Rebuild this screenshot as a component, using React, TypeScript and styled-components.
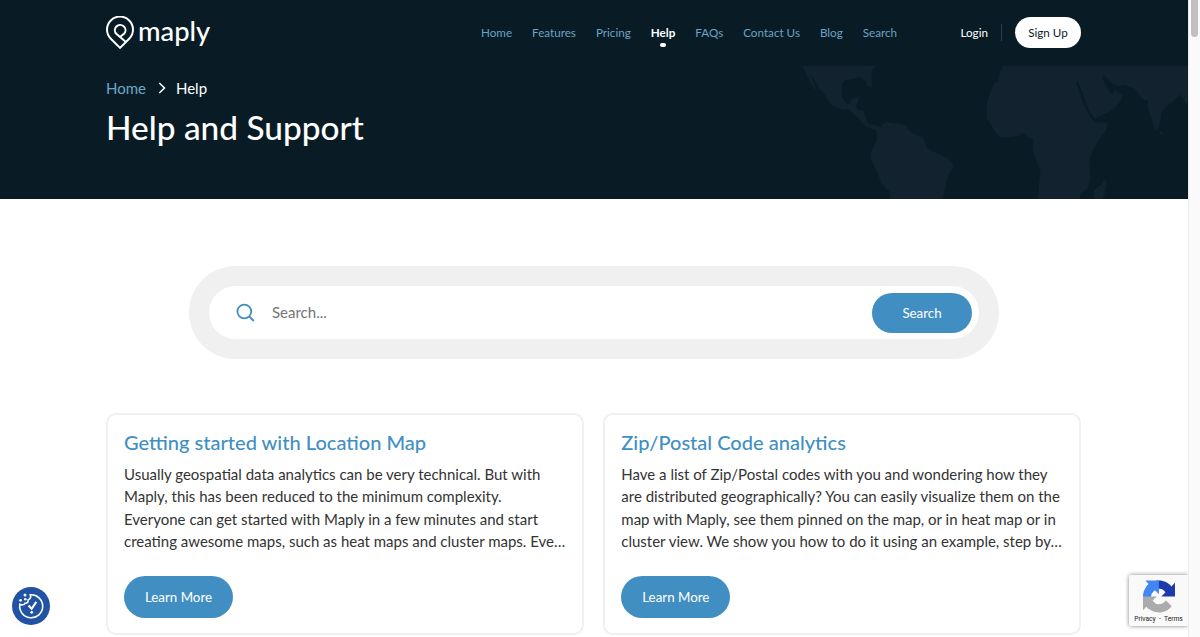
import React from "react";
import styled, { createGlobalStyle } from "styled-components";

const GlobalStyle = createGlobalStyle`
  *, *::before, *::after { box-sizing: border-box; }
  body { margin: 0; background: #fff; overflow: hidden; font-family: Lato, "Liberation Sans", sans-serif; }
  h1, h2, p { margin: 0; }
  a { text-decoration: none; color: inherit; }
  button, input { font-family: inherit; border: 0; padding: 0; }
`;

const Page = styled.div`
  display: flex;
  height: 637px;
  overflow: hidden;
`;
const Content = styled.div`
  width: 1188px;
  flex: none;
`;
const ScrollTrack = styled.div`
  flex: 1;
  background: #fafafa;
  border-left: 1px solid #ececec;
  padding-left: 2px;
`;
const ScrollThumb = styled.div`
  width: 7px;
  height: 37px;
  border-radius: 0 0 4px 4px;
  background: #c1c1c1;
`;

const TopBar = styled.header`
  height: 66px;
  background: #091c25;
  padding: 0 107px 1px 106px;
  display: flex;
  align-items: center;
`;
const Logo = styled.a`
  display: flex;
  align-items: center;
  width: 375px;
  color: #fff;
`;
const LogoMark = styled.svg`
  width: 28px;
  height: 34px;
  margin-right: 4px;
`;
const Wordmark = styled.span`
  font-size: 27.3px;
  line-height: 34px;
  font-weight: 500;
  margin-top: -4px;
`;
const Nav = styled.nav`
  display: flex;
  gap: 20px;
  padding-bottom: 2px;
`;
const NavLink = styled.a<{ $active?: boolean }>`
  position: relative;
  font-size: 11.67px;
  line-height: 18px;
  color: ${(p) => (p.$active ? "#fff" : "#6aa3c4")};
  font-weight: ${(p) => (p.$active ? 700 : 400)};
`;
const ActiveDot = styled.span`
  position: absolute;
  left: 50%;
  top: 20px;
  width: 6px;
  height: 4px;
  margin-left: -3px;
  border-radius: 2px;
  background: #fff;
`;
const Account = styled.div`
  margin-left: auto;
  display: flex;
  align-items: center;
  font-size: 11.67px;
  line-height: 18px;
  color: #fff;
`;
const LoginLink = styled.a`
  padding-bottom: 2px;
`;
const Divider = styled.span`
  width: 1px;
  height: 17px;
  margin: 0 13px;
  background: #1d455b;
`;
const SignUp = styled.button`
  width: 66px;
  height: 31px;
  padding-bottom: 2px;
  border-radius: 16px;
  background: #fff;
  color: #091c25;
  font-size: 11.67px;
`;

const Hero = styled.section`
  height: 133px;
  background: #091c25;
  display: grid;
  grid-template-columns: 674px 408px;
  padding-left: 106px;
`;
const HeroText = styled.div`
  padding-top: 12px;
`;
const Breadcrumb = styled.div`
  display: flex;
  align-items: center;
  font-size: 15px;
  line-height: 20px;
  color: #fff;
`;
const CrumbLink = styled.a`
  color: #6ca9c7;
`;
const Chevron = styled.svg`
  width: 8px;
  height: 12px;
  margin: 0 10px 0 12px;
`;
const Title = styled.h1`
  font-size: 33.4px;
  font-weight: 500;
  line-height: 40px;
  color: #fff;
  margin-top: 9px;
`;
const WorldMap = styled.svg`
  width: 408px;
  height: 133px;
  display: block;
`;

const SearchFrame = styled.form`
  width: 810px;
  height: 93px;
  margin: 67px auto 54px 189px;
  padding: 20px;
  border-radius: 47px;
  background: #f0f0f0;
`;
const SearchBox = styled.div`
  height: 53px;
  border-radius: 27px;
  background: #fff;
  display: flex;
  align-items: center;
  padding: 0 7px 0 27px;
`;
const SearchIcon = styled.svg`
  width: 20px;
  height: 20px;
`;
const SearchInput = styled.input`
  flex: 1;
  margin-left: 16px;
  padding-bottom: 2px;
  font-size: 15px;
  color: #333;
  outline: 0;
  background: transparent;
  &::placeholder { color: #757575; opacity: 1; }
`;
const PillButton = styled.button<{ $w: number; $h: number }>`
  width: ${(p) => p.$w}px;
  height: ${(p) => p.$h}px;
  border-radius: 21px;
  background: #418fc2;
  color: #fff;
  font-size: 13.33px;
`;

const Cards = styled.main`
  display: grid;
  grid-template-columns: 478px 478px;
  gap: 19.3px;
  padding-left: 106px;
`;
const Card = styled.article`
  height: 222px;
  border: 2px solid #f0f0f0;
  border-radius: 10px;
  padding: 14px 14px 0 16px;
`;
const CardTitle = styled.h2`
  font-size: 20.05px;
  line-height: 26px;
  font-weight: 500;
  color: #418fc2;
`;
const CardText = styled.p`
  margin: 7.5px 0 23.5px;
  font-size: 15px;
  line-height: 22.5px;
  color: #333;
  white-space: nowrap;
`;

const CookieButton = styled.button`
  position: absolute;
  left: 12px;
  top: 587px;
  width: 38px;
  height: 38px;
  border-radius: 50%;
  background: #2152a3;
`;
const CookieArt = styled.svg`
  display: block;
  width: 38px;
  height: 38px;
`;
const Captcha = styled.aside`
  position: absolute;
  left: 1129px;
  top: 575px;
  width: 59px;
  height: 51px;
  background: #f9f9f9;
  border-radius: 2px 0 0 2px;
  box-shadow: 0 0 4px #808080;
  clip-path: inset(-5px 0 -5px -5px);
  display: flex;
  flex-direction: column;
  align-items: center;
  padding-top: 5px;
`;
const CaptchaArt = styled.svg`
  width: 32px;
  height: 33px;
`;
const CaptchaText = styled.span`
  font: 6.67px/10px Roboto, sans-serif;
  margin-top: 1px;
  color: #222;
  white-space: pre;
`;

const navItems = ["Home", "Features", "Pricing", "Help", "FAQs", "Contact Us", "Blog", "Search"];

const cards = [
  {
    title: "Getting started with Location Map",
    lines: [
      "Usually geospatial data analytics can be very technical. But with",
      "Maply, this has been reduced to the minimum complexity.",
      "Everyone can get started with Maply in a few minutes and start",
      "creating awesome maps, such as heat maps and cluster maps. Eve…",
    ],
  },
  {
    title: "Zip/Postal Code analytics",
    lines: [
      "Have a list of Zip/Postal codes with you and wondering how they",
      "are distributed geographically? You can easily visualize them on the",
      "map with Maply, see them pinned on the map, or in heat map or in",
      "cluster view. We show you how to do it using an example, step by…",
    ],
  },
];

export default function App() {
  return (
    <Page>
      <GlobalStyle />
      <Content>
        <TopBar>
          <Logo href="#">
            <LogoMark viewBox="0 0 28 34" fill="none" stroke="#fff" strokeWidth="2">
              <path d="M19.3 25.4 10.3 17.8A5.3 5.3 0 1 1 18.300 17.500L14.200 20.800M14 31.900 4.800 22.800A13 13 0 1 1 23.200 22.800Z" />
            </LogoMark>
            <Wordmark>maply</Wordmark>
          </Logo>
          <Nav>
            {navItems.map((item) => (
              <NavLink key={item} href="#" $active={item === "Help"}>
                {item}
                {item === "Help" && <ActiveDot />}
              </NavLink>
            ))}
          </Nav>
          <Account>
            <LoginLink href="#">Login</LoginLink>
            <Divider />
            <SignUp>Sign Up</SignUp>
          </Account>
        </TopBar>
        <Hero>
          <HeroText>
            <Breadcrumb>
              <CrumbLink href="#">Home</CrumbLink>
              <Chevron viewBox="0 0 8 12" fill="none" stroke="#fff" strokeWidth="1.5">
                <path d="m1.3 1 5.2 5-5.2 5" />
              </Chevron>
              <span>Help</span>
            </Breadcrumb>
            <Title>Help and Support</Title>
          </HeroText>
          <WorldMap viewBox="0 48 1224 399" fill="#12232f">
            <path d="M66 48H290L274 62 276 112 264 108 252 88 238 80 222 86 196 90 186 100V142L198 160 208 163 216 146 238 142 228 168 232 178 250 184 256 200 266 222 288 226 300 230 318 214 330 218 362 222 380 228 388 242 402 252 428 262 440 292 456 304 482 314 506 326 520 346 514 362 502 382 498 402 488 447H330L328 424 306 402 288 360 272 324 276 300 292 268 288 240 266 234 246 220 236 204 220 192 206 178 190 180 166 172 148 160 136 134 120 118 104 92 90 72 112 126 96 106 80 74Z" />
            <path d="M670 48H1224V158L1216 162 1210 144 1198 134 1180 154 1160 168 1144 186 1142 208 1132 242 1124 236 1114 204 1104 174 1104 154 1088 148 1076 132 1064 116 1034 104 1014 108 992 96 972 76 966 80 976 104 992 130 1000 130 1002 118 1014 126 1028 136 1022 154 1006 172 982 188 946 206 936 196 920 168 906 122 892 92 888 96 900 132 914 168 932 202 944 216 984 218 978 240 958 268 936 306 928 330 932 384 922 416 900 432V447H774L778 392 782 366 766 324 758 294 760 268 744 262 728 248 714 258 690 260 664 264 648 250 634 226 620 204V160L632 124 642 102 656 90 660 64Z" />
            <path d="M972 388 980 398 976 424 968 447H942V424L952 410 964 406ZM1140 240 1152 254 1140 252Z" />
          </WorldMap>
        </Hero>
        <SearchFrame>
          <SearchBox>
            <SearchIcon viewBox="0 0 20 20" fill="none" stroke="#418fc2" strokeWidth="1.8">
              <circle cx="8.3" cy="8.5" r="6.9" />
              <path d="m13.3 13.5 4.500 4.500" />
            </SearchIcon>
            <SearchInput placeholder="Search..." />
            <PillButton type="button" $w={100} $h={40}>Search</PillButton>
          </SearchBox>
        </SearchFrame>
        <Cards>
          {cards.map((card) => (
            <Card key={card.title}>
              <CardTitle>{card.title}</CardTitle>
              <CardText>
                {card.lines.map((line, i) => (
                  <React.Fragment key={line}>
                    {i > 0 && <br />}
                    {line}
                  </React.Fragment>
                ))}
              </CardText>
              <PillButton $w={109} $h={42}>Learn More</PillButton>
            </Card>
          ))}
        </Cards>
      </Content>
      <ScrollTrack>
        <ScrollThumb />
      </ScrollTrack>
      <CookieButton aria-label="Cookie settings">
        <CookieArt viewBox="0 0 38 38" fill="none" stroke="#fff" strokeWidth="1.6">
          <path d="M18.300 7.800A11.500 11.500 0 1 1 7.900 17.200C10 18.400 12.200 18 13 16.200 15.300 16.300 16.500 15 16.100 12.900 18.300 12 19 10 18.300 7.800Z" />
          <path d="m16.600 18.500 3 3.300 4.700-6.900" strokeWidth="2" />
          <g fill="#fff" stroke="none">
            <circle cx="13" cy="7.900" r="1.500" />
            <circle cx="8.600" cy="13.300" r="1.400" />
            <circle cx="13.300" cy="12.300" r="1.300" />
            <circle cx="19.700" cy="25.300" r="1.400" />
          </g>
        </CookieArt>
      </CookieButton>
      <Captcha>
        <CaptchaArt viewBox="0 0 64 64">
          <path fill="#1c3aa9" d="M64 31.955l-.033-1.370V4.687l-7.160 7.160C50.948 4.674 42.033.093 32.050.093c-10.400 0-19.622 4.960-25.458 12.640l11.736 11.860a15.550 15.550 0 0 1 4.754-5.334c2.050-1.600 4.952-2.906 8.968-2.906.485 0 .860.057 1.135.163 4.976.393 9.288 3.140 11.828 7.124l-8.307 8.307L64 31.953" />
          <path fill="#4285f4" d="M31.862.094l-1.370.033H4.594l7.160 7.160C4.580 13.147 0 22.060 0 32.046c0 10.400 4.960 19.622 12.640 25.458L24.500 45.768a15.550 15.550 0 0 1-5.334-4.754c-1.600-2.050-2.906-4.952-2.906-8.968 0-.485.057-.860.163-1.135.393-4.976 3.140-9.288 7.124-11.828l8.307 8.307L31.860.095" />
          <path fill="#ababab" d="M.001 32.045l.033 1.370v25.898l7.160-7.160c5.860 7.173 14.774 11.754 24.760 11.754 10.400 0 19.622-4.960 25.458-12.640l-11.736-11.860a15.550 15.550 0 0 1-4.754 5.334c-2.050 1.600-4.952 2.906-8.968 2.906-.485 0-.860-.057-1.135-.163-4.976-.393-9.288-3.140-11.828-7.124l8.307-8.307c-10.522.040-22.400.066-27.295-.005" />
        </CaptchaArt>
        <CaptchaText>Privacy  -  Terms</CaptchaText>
      </Captcha>
    </Page>
  );
}
